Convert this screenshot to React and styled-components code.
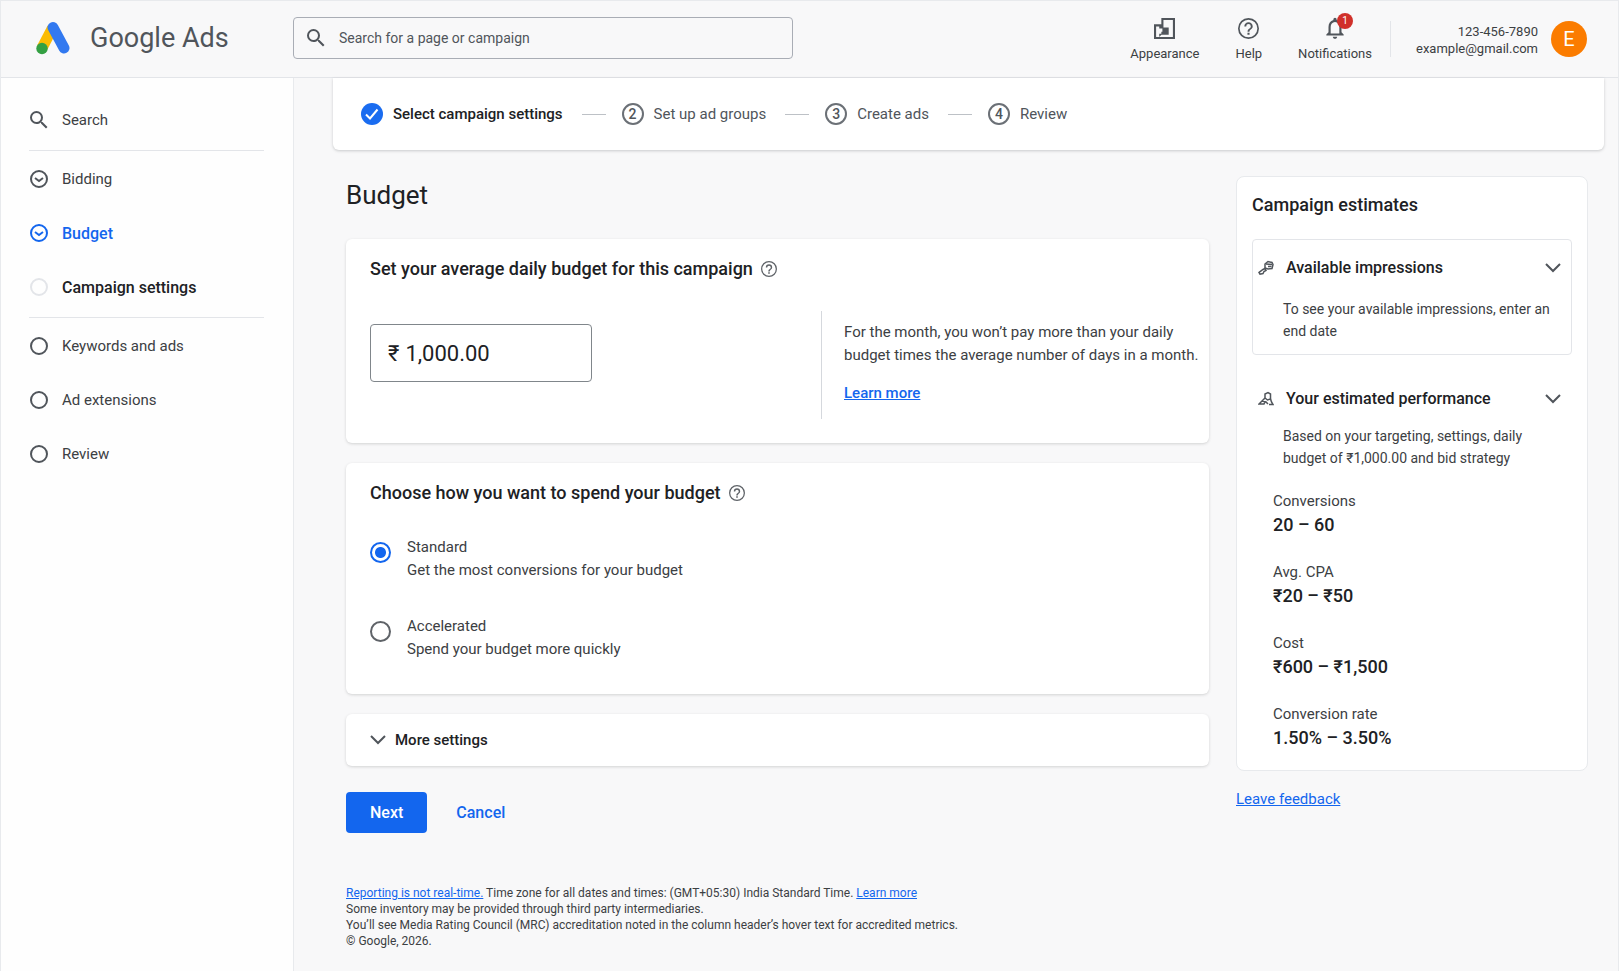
import React, { useState } from 'react'
import styled, { createGlobalStyle } from 'styled-components'

const GlobalStyle = createGlobalStyle`
  * {
    box-sizing: border-box;
  }
  body {
    margin: 0;
    background: #f8f8f9;
    color: #3c4043;
    font-family: Roboto, "Liberation Sans", sans-serif;
    font-size: 14px;
  }
  button, input {
    font-family: inherit;
    color: inherit;
  }
  h1, h2, h3, p, ul, ol, dl, dd {
    margin: 0;
    padding: 0;
  }
`

const SearchIcon = () => (
  <svg width="20" height="20" viewBox="2 2 20 20" fill="currentColor" aria-hidden="true">
    <path d="M15.5 14h-.79l-.28-.27A6.47 6.47 0 0 0 16 9.5 6.5 6.5 0 1 0 9.5 16c1.61 0 3.09-.59 4.23-1.57l.27.28v.79l5 4.99L20.49 19zm-6 0a4.5 4.5 0 1 1 0-9 4.5 4.5 0 0 1 0 9" />
  </svg>
)

const HelpIcon = ({ size = 24 }) => (
  <svg width={size} height={size} viewBox="2 2 20 20" fill="currentColor" aria-hidden="true">
    <path d="M11 18h2v-2h-2zm1-16a10 10 0 1 0 0 20 10 10 0 0 0 0-20m0 18.4a8.4 8.4 0 1 1 0-16.8 8.4 8.4 0 0 1 0 16.8M12 6a4 4 0 0 0-4 4h1.8a2.2 2.2 0 1 1 4.4 0c0 2-3.1 1.75-3.1 5h1.8c0-2.25 3.1-2.5 3.1-5a4 4 0 0 0-4-4" />
  </svg>
)

const BellIcon = () => (
  <svg width="26" height="26" viewBox="0 0 24 24" fill="currentColor" aria-hidden="true">
    <path d="M12 22c1.1 0 2-.9 2-2h-4c0 1.1.9 2 2 2m6-6v-5c0-3.07-1.63-5.64-4.5-6.32V4a1.5 1.5 0 0 0-3 0v.68C7.64 5.36 6 7.92 6 11v5l-2 2v1h16v-1zm-2 1H8v-6c0-2.48 1.51-4.5 4-4.5s4 2.02 4 4.5z" />
  </svg>
)

const AppearanceIcon = () => (
  <svg width="21" height="21" viewBox="0 0 20 20" fill="none" stroke="currentColor" strokeWidth="2" aria-hidden="true">
    <path d="M8 10V1h11v18H1V7h5v3" />
    <path d="M8 9h6v7H7l-2 2v-3h2v-2h1z" fill="currentColor" stroke="none" />
  </svg>
)

const ChevronIcon = () => (
  <svg width="16" height="10" viewBox="0 0 16 10" fill="none" stroke="#50555b" strokeWidth="2" aria-hidden="true">
    <path d="M1 1l7 7 7-7" />
  </svg>
)

const CheckBadge = () => (
  <svg width="22" height="22" viewBox="0 0 22 22" aria-hidden="true">
    <circle cx="11" cy="11" r="11" fill="#1a6cf0" />
    <path d="M5 11.5l4 4 7.5-9" fill="none" stroke="#fff" strokeWidth="2" />
  </svg>
)

const StatusIcon = ({ done }) => (
  <svg width="20" height="20" viewBox="0 0 20 20" fill="none" stroke="currentColor" strokeWidth="2" aria-hidden="true">
    <circle cx="10" cy="10" r="8" />
    {done && <path d="M6 9l4 3 4-3" />}
  </svg>
)

const KeyIcon = () => (
  <svg width="16" height="16" viewBox="0 0 16 16" fill="none" stroke="currentColor" strokeWidth="1.5" aria-hidden="true">
    <path d="M7 8.500L5 9.500 1 12.500l1 1.700 3-.7 1-2 2-1z" />
    <path d="M7 4l3-2.500 4 1 1 2-1 4-4 .5-3-1z" />
    <path d="M8 4l6 .5M10 6.500h3.500" />
  </svg>
)

const PeopleIcon = () => (
  <svg width="16" height="16" viewBox="0 0 16 16" fill="none" stroke="currentColor" strokeWidth="1.5" aria-hidden="true">
    <path d="M7 7V3l3-1.500 2.500 1.500v5l-3 1z" />
    <path d="M7 7L1 13h5l1-2M12.500 8l1 3 1.500 2.500h-4M4 10l4 1 2 2" />
  </svg>
)

const AdsLogo = () => (
  <svg width="34" height="34" viewBox="0 0 34 34" aria-hidden="true">
    <path d="M16.5 7L6 27" stroke="#fbbc04" strokeWidth="11" />
    <path d="M17 6.5L28 27" stroke="#3279f0" strokeWidth="11" strokeLinecap="round" />
    <circle cx="6" cy="27.5" r="5.7" fill="#34a043" />
  </svg>
)

const sidebarGroups = [
  [
    { name: 'Bidding', done: true },
    { name: 'Budget', done: true, state: 'active' },
    { name: 'Campaign settings', state: 'heading' },
  ],
  [{ name: 'Keywords and ads' }, { name: 'Ad extensions' }, { name: 'Review' }],
]

const steps = ['Select campaign settings', 'Set up ad groups', 'Create ads', 'Review']

const spendOptions = [
  { id: 'standard', title: 'Standard', text: 'Get the most conversions for your budget' },
  { id: 'accelerated', title: 'Accelerated', text: 'Spend your budget more quickly' },
]

const metrics = [
  { label: 'Conversions', value: '20 – 60' },
  { label: 'Avg. CPA', value: '₹20 – ₹50' },
  { label: 'Cost', value: '₹600 – ₹1,500' },
  { label: 'Conversion rate', value: '1.50% – 3.50%' },
]

const Header = () => (
  <HeaderWrapper>
    <Brand href="#">
      <AdsLogo />
      <span>Google Ads</span>
    </Brand>
    <SearchBox>
      <SearchIcon />
      <input type="text" placeholder="Search for a page or campaign" aria-label="Search for a page or campaign" />
    </SearchBox>
    <Tools>
      <ToolButton type="button">
        <ToolIcon><AppearanceIcon /></ToolIcon>
        Appearance
      </ToolButton>
      <ToolButton type="button">
        <ToolIcon><HelpIcon size={21} /></ToolIcon>
        Help
      </ToolButton>
      <ToolButton type="button">
        <ToolIcon>
          <BellIcon />
          <AlertBadge>1</AlertBadge>
        </ToolIcon>
        Notifications
      </ToolButton>
    </Tools>
    <Account>
      <AccountText>
        <p>123-456-7890</p>
        <p>example@gmail.com</p>
      </AccountText>
      <Avatar type="button" aria-label="Account">E</Avatar>
    </Account>
  </HeaderWrapper>
)

const Sidebar = () => (
  <SidebarWrapper>
    <SideGroup>
      <li>
        <SideLink href="#">
          <SearchIcon />
          Search
        </SideLink>
      </li>
    </SideGroup>
    {sidebarGroups.map((group, i) => (
      <SideGroup key={i}>
        {group.map((item) => (
          <li key={item.name}>
            <SideLink href="#" $state={item.state}>
              <StatusIcon done={item.done} />
              {item.name}
            </SideLink>
          </li>
        ))}
      </SideGroup>
    ))}
  </SidebarWrapper>
)

const Stepper = () => (
  <StepperWrapper>
    {steps.map((step, i) => (
      <Step key={step} $current={i === 0}>
        {i === 0 ? <CheckBadge /> : <StepNumber>{i + 1}</StepNumber>}
        {step}
      </Step>
    ))}
  </StepperWrapper>
)

const BudgetForm = () => {
  const [budget, setBudget] = useState('1,000.00')
  const [spend, setSpend] = useState('standard')

  return (
    <FormColumn onSubmit={(e) => e.preventDefault()}>
      <PageTitle>Budget</PageTitle>
      <Card>
        <CardTitle>
          <label htmlFor="budget">Set your average daily budget for this campaign</label>
          <HelpButton type="button" aria-label="Help"><HelpIcon size={16} /></HelpButton>
        </CardTitle>
        <BudgetRow>
          <MoneyField>
            <span>₹</span>
            <input id="budget" type="text" value={budget} onChange={(e) => setBudget(e.target.value)} />
          </MoneyField>
          <BudgetNote>
            <p>For the month, you won’t pay more than your daily budget times the average number of days in a month.</p>
            <NoteLink href="#">Learn more</NoteLink>
          </BudgetNote>
        </BudgetRow>
      </Card>
      <Card>
        <CardTitle>
          Choose how you want to spend your budget
          <HelpButton type="button" aria-label="Help"><HelpIcon size={16} /></HelpButton>
        </CardTitle>
        <Options>
          {spendOptions.map((option) => (
            <Option key={option.id}>
              <Radio
                type="radio"
                name="spend"
                value={option.id}
                checked={spend === option.id}
                onChange={() => setSpend(option.id)}
              />
              <span>
                {option.title}
                <br />
                {option.text}
              </span>
            </Option>
          ))}
        </Options>
      </Card>
      <MoreSettings type="button">
        <ChevronIcon />
        More settings
      </MoreSettings>
      <Actions>
        <NextButton type="submit">Next</NextButton>
        <CancelButton type="button">Cancel</CancelButton>
      </Actions>
      <Footer>
        <p>
          <Link href="#">Reporting is not real-time.</Link> Time zone for all dates and times: (GMT+05:30) India
          Standard Time. <Link href="#">Learn more</Link>
        </p>
        <p>Some inventory may be provided through third party intermediaries.</p>
        <p>You’ll see Media Rating Council (MRC) accreditation noted in the column header’s hover text for accredited metrics.</p>
        <p>© Google, 2026.</p>
      </Footer>
    </FormColumn>
  )
}

const Estimates = () => (
  <EstimatesColumn>
    <EstimatesCard>
      <EstimatesTitle>Campaign estimates</EstimatesTitle>
      <Panel $outlined>
        <PanelToggle type="button">
          <KeyIcon />
          <span>Available impressions</span>
          <ChevronIcon />
        </PanelToggle>
        <PanelText>To see your available impressions, enter an end date</PanelText>
      </Panel>
      <Panel>
        <PanelToggle type="button">
          <PeopleIcon />
          <span>Your estimated performance</span>
          <ChevronIcon />
        </PanelToggle>
        <PanelText>Based on your targeting, settings, daily budget of ₹1,000.00 and bid strategy</PanelText>
      </Panel>
      <Metrics>
        {metrics.map((metric) => (
          <div key={metric.label}>
            <dt>{metric.label}</dt>
            <dd>{metric.value}</dd>
          </div>
        ))}
      </Metrics>
    </EstimatesCard>
    <Link href="#">Leave feedback</Link>
  </EstimatesColumn>
)

const App = () => (
  <Page>
    <GlobalStyle />
    <Header />
    <Body>
      <Sidebar />
      <Main>
        <Stepper />
        <Columns>
          <BudgetForm />
          <Estimates />
        </Columns>
      </Main>
    </Body>
  </Page>
)

const Page = styled.div`
  display: flex;
  flex-direction: column;
  min-height: 100vh;
  border: 1px solid #e8eaed;
`

const HeaderWrapper = styled.header`
  display: flex;
  align-items: center;
  height: 77px;
  padding: 0 31px 0 35px;
  border-bottom: 1px solid #e3e5e9;
`

const Brand = styled.a`
  display: flex;
  align-items: center;
  gap: 20px;
  width: 257px;
  margin-bottom: 2px;
  color: #50555b;
  font-size: 27px;
  text-decoration: none;
`

const SearchBox = styled.label`
  display: flex;
  align-items: center;
  gap: 13px;
  flex: 0 1 500px;
  height: 42px;
  margin-bottom: 2px;
  padding: 0 12px;
  border: 1px solid #a9adb5;
  border-radius: 4px;
  color: #50555b;
  input {
    flex: 1;
    padding: 0;
    border: 0;
    outline: 0;
    background: transparent;
    font-size: 14px;
  }
  input::placeholder {
    color: #50555b;
    opacity: 1;
  }
`

const Tools = styled.div`
  display: flex;
  gap: 36px;
  margin-left: auto;
  padding-top: 2px;
`

const ToolButton = styled.button`
  display: flex;
  flex-direction: column;
  align-items: center;
  gap: 8px;
  padding: 0;
  border: 0;
  background: none;
  font-size: 13px;
  line-height: 16px;
`

const ToolIcon = styled.span`
  display: flex;
  align-items: center;
  justify-content: center;
  position: relative;
  height: 20px;
  color: #50555b;
`

const AlertBadge = styled.span`
  position: absolute;
  top: -5px;
  right: -5px;
  width: 16px;
  border-radius: 8px;
  background: #d0302a;
  color: #fff;
  font-size: 10px;
  line-height: 16px;
`

const Account = styled.div`
  display: flex;
  align-items: center;
  gap: 13px;
  height: 36px;
  margin-left: 18px;
  padding-left: 25px;
  border-left: 1px solid #e3e5e9;
`

const AccountText = styled.div`
  padding-top: 2px;
  font-size: 13px;
  line-height: 17px;
  text-align: right;
`

const Avatar = styled.button`
  width: 36px;
  height: 36px;
  padding: 0;
  border: 0;
  border-radius: 50%;
  background: #fb7c00;
  color: #fff;
  font-size: 20px;
`

const Body = styled.div`
  display: flex;
  flex: 1;
`

const SidebarWrapper = styled.nav`
  flex: 0 0 293px;
  padding: 14px 29px 0 28px;
  border-right: 1px solid #e8eaed;
  background: #fefefe;
`

const SideGroup = styled.ul`
  padding: 1px 0 3px;
  list-style: none;
  & + & {
    border-top: 1px solid #e3e5e9;
  }
`

const SideLink = styled.a`
  display: flex;
  align-items: center;
  gap: 13px;
  height: 54px;
  color: ${({ $state }) => ($state === 'active' ? '#1366ee' : $state === 'heading' ? '#202124' : '#3c4043')};
  font-size: ${({ $state }) => ($state ? '16px' : '15px')};
  font-weight: ${({ $state }) => ($state ? 500 : 400)};
  text-decoration: none;
  svg {
    color: ${({ $state }) => ($state === 'active' ? '#1366ee' : $state === 'heading' ? '#e3e5e9' : '#50555b')};
  }
`

const Main = styled.main`
  flex: 1;
  min-width: 0;
`

const StepperWrapper = styled.ol`
  display: flex;
  align-items: center;
  height: 72px;
  margin: 0 14px 0 39px;
  padding: 0 28px;
  border-radius: 0 0 6px 6px;
  background: #fff;
  box-shadow: 0 1px 3px rgba(60, 64, 67, 0.25);
  list-style: none;
`

const Step = styled.li`
  display: flex;
  align-items: center;
  gap: 10px;
  color: ${({ $current }) => ($current ? '#202124' : '#50555b')};
  font-size: 15px;
  font-weight: ${({ $current }) => ($current ? 500 : 400)};
  &:not(:first-child)::before {
    content: '';
    width: 24px;
    margin: 0 6px 0 19px;
    border-top: 1px solid #bdc1c6;
  }
`

const StepNumber = styled.span`
  width: 22px;
  border: 2px solid #6b7076;
  border-radius: 50%;
  font-size: 14px;
  font-weight: 500;
  line-height: 18px;
  text-align: center;
`

const Columns = styled.div`
  display: flex;
  align-items: flex-start;
  gap: 27px;
  padding: 26px 30px 26px 52px;
`

const FormColumn = styled.form`
  flex: 1;
  min-width: 0;
`

const PageTitle = styled.h1`
  margin-bottom: 25px;
  color: #202124;
  font-size: 26px;
  font-weight: 400;
  line-height: 38px;
`

const Card = styled.section`
  margin-bottom: 20px;
  padding: 17px 8px 24px 24px;
  border-radius: 6px;
  background: #fff;
  box-shadow: 0 1px 3px rgba(60, 64, 67, 0.2);
`

const CardTitle = styled.h2`
  display: flex;
  align-items: center;
  gap: 8px;
  color: #202124;
  font-size: 18px;
  font-weight: 500;
  line-height: 26px;
`

const HelpButton = styled.button`
  display: flex;
  padding: 0;
  border: 0;
  background: none;
  color: #5f6368;
`

const BudgetRow = styled.div`
  display: flex;
  align-items: flex-start;
  justify-content: space-between;
  padding-top: 29px;
`

const MoneyField = styled.div`
  display: flex;
  align-items: center;
  gap: 6px;
  width: 222px;
  height: 58px;
  margin-top: 13px;
  padding: 0 17px;
  border: 1px solid #80868b;
  border-radius: 4px;
  color: #202124;
  font-size: 22px;
  input {
    width: 100%;
    padding: 0;
    border: 0;
    outline: 0;
    background: transparent;
    font-size: 22px;
  }
`

const BudgetNote = styled.div`
  width: 380px;
  height: 108px;
  padding: 10px 0 0 22px;
  border-left: 1px solid #d5d8dd;
  font-size: 15px;
  line-height: 23px;
`

const Link = styled.a`
  color: #1366ee;
  text-decoration: underline;
`

const NoteLink = styled(Link)`
  display: inline-block;
  margin-top: 15px;
  font-weight: 500;
`

const Options = styled.div`
  display: flex;
  flex-direction: column;
  gap: 33px;
  padding: 30px 0 9px;
`

const Option = styled.label`
  display: flex;
  gap: 16px;
  font-size: 15px;
  line-height: 23px;
`

const Radio = styled.input`
  appearance: none;
  width: 21px;
  height: 21px;
  margin: 6px 0 0;
  border: 2px solid #5f6368;
  border-radius: 50%;
  &:checked {
    border-color: #1366ee;
    background: radial-gradient(circle, #1366ee 5px, transparent 6px);
  }
`

const MoreSettings = styled.button`
  display: flex;
  align-items: center;
  gap: 9px;
  width: 100%;
  height: 52px;
  padding: 0 24px;
  border: 0;
  border-radius: 6px;
  background: #fff;
  box-shadow: 0 1px 3px rgba(60, 64, 67, 0.2);
  color: #202124;
  font-size: 15px;
  font-weight: 500;
`

const Actions = styled.div`
  display: flex;
  gap: 16px;
  padding: 26px 0 52px;
`

const NextButton = styled.button`
  height: 41px;
  padding: 0 24px;
  border: 0;
  border-radius: 4px;
  background: #1366ee;
  color: #fff;
  font-size: 16px;
  font-weight: 500;
`

const CancelButton = styled(NextButton)`
  padding: 0 13px;
  background: none;
  color: #1366ee;
`

const Footer = styled.footer`
  font-size: 12px;
  line-height: 16px;
`

const EstimatesColumn = styled.aside`
  flex: 0 0 352px;
  font-size: 15px;
  line-height: 22px;
`

const EstimatesCard = styled.section`
  margin-bottom: 17px;
  padding: 15px;
  border: 1px solid #e8eaed;
  border-radius: 8px;
  background: #fff;
`

const EstimatesTitle = styled.h2`
  margin-bottom: 21px;
  color: #202124;
  font-size: 18px;
  font-weight: 500;
  line-height: 26px;
`

const Panel = styled.div`
  display: flex;
  flex-direction: column;
  gap: ${({ $outlined }) => ($outlined ? 16 : 12)}px;
  padding: 14px 5px 12px;
  border: 1px solid ${({ $outlined }) => ($outlined ? '#e3e5e9' : 'transparent')};
  border-radius: 4px;
  & + & {
    margin-top: 15px;
  }
`

const PanelToggle = styled.button`
  display: flex;
  align-items: center;
  gap: 12px;
  width: 100%;
  padding: 0 5px 0 0;
  border: 0;
  background: none;
  color: #202124;
  font-size: 16px;
  font-weight: 500;
  line-height: 28px;
  text-align: left;
  span {
    flex: 1;
  }
  svg {
    color: #50555b;
  }
`

const PanelText = styled.p`
  padding: 0 6px 0 25px;
  font-size: 14px;
`

const Metrics = styled.dl`
  display: flex;
  flex-direction: column;
  gap: 23px;
  padding: 8px 21px 4px;
  dd {
    color: #202124;
    font-size: 18px;
    font-weight: 500;
    line-height: 26px;
  }
`

export default App
